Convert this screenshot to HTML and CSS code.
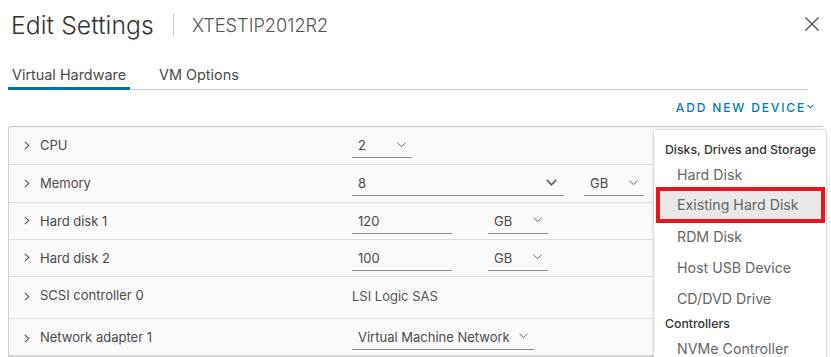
FILE: index.html
```html
<!DOCTYPE html>
<html>
<head>
<meta charset="utf-8">
<link rel="stylesheet" href="styles.css">
</head>
<body>
<div class="modal">
  <div class="header">
    <h1 class="title">Edit Settings</h1>
    <span class="divider"></span>
    <span class="vmname">XTESTIP2012R2</span>
    <span class="spacer"></span>
    <svg class="close" width="16" height="16" viewBox="0 0 16 16"><path d="M1.5 1.5 L14.5 14.5 M14.5 1.5 L1.5 14.5" stroke="#555" stroke-width="1.4" fill="none"/></svg>
  </div>
  <div class="tabs">
    <span class="tab active">Virtual Hardware</span>
    <span class="tab">VM Options</span>
  </div>
  <div class="actions">
    <span class="add">ADD NEW DEVICE</span>
    <svg class="addcaret" width="7" height="5" viewBox="0 0 7 5"><path d="M0.5 0.8 L3.5 3.8 L6.5 0.8" stroke="#0079b8" stroke-width="1.1" fill="none"/></svg>
  </div>
  <div class="panel">
    <div class="row">
      <div class="label"><svg class="chev" width="6" height="9" viewBox="0 0 6 9"><path d="M0.8 0.8 L4.8 4.5 L0.8 8.2" stroke="#565656" stroke-width="1.1" fill="none"/></svg>CPU</div>
      <div class="vals">
        <div class="field w60"><span>2</span><svg width="9" height="6" viewBox="0 0 9 6"><path d="M0.5 0.8 L4.5 4.6 L8.5 0.8" stroke="#666" stroke-width="1" fill="none"/></svg></div>
      </div>
    </div>
    <div class="row">
      <div class="label"><svg class="chev" width="6" height="9" viewBox="0 0 6 9"><path d="M0.8 0.8 L4.8 4.5 L0.8 8.2" stroke="#565656" stroke-width="1.1" fill="none"/></svg>Memory</div>
      <div class="vals">
        <div class="field w211"><span>8</span><svg class="big" width="11" height="7" viewBox="0 0 11 7"><path d="M0.8 0.8 L5.5 5.8 L10.2 0.8" stroke="#555" stroke-width="1.5" fill="none"/></svg></div>
        <div class="field w60 gap21"><span>GB</span><svg width="9" height="6" viewBox="0 0 9 6"><path d="M0.5 0.8 L4.5 4.6 L8.5 0.8" stroke="#666" stroke-width="1" fill="none"/></svg></div>
      </div>
    </div>
    <div class="row">
      <div class="label"><svg class="chev" width="6" height="9" viewBox="0 0 6 9"><path d="M0.8 0.8 L4.8 4.5 L0.8 8.2" stroke="#565656" stroke-width="1.1" fill="none"/></svg>Hard disk 1</div>
      <div class="vals">
        <div class="field w100"><span>120</span></div>
        <div class="field w60 gap36"><span>GB</span><svg width="9" height="6" viewBox="0 0 9 6"><path d="M0.5 0.8 L4.5 4.6 L8.5 0.8" stroke="#666" stroke-width="1" fill="none"/></svg></div>
      </div>
    </div>
    <div class="row">
      <div class="label"><svg class="chev" width="6" height="9" viewBox="0 0 6 9"><path d="M0.8 0.8 L4.8 4.5 L0.8 8.2" stroke="#565656" stroke-width="1.1" fill="none"/></svg>Hard disk 2</div>
      <div class="vals">
        <div class="field w100"><span>100</span></div>
        <div class="field w60 gap36"><span>GB</span><svg width="9" height="6" viewBox="0 0 9 6"><path d="M0.5 0.8 L4.5 4.6 L8.5 0.8" stroke="#666" stroke-width="1" fill="none"/></svg></div>
      </div>
    </div>
    <div class="row tall">
      <div class="label"><svg class="chev low" width="6" height="9" viewBox="0 0 6 9"><path d="M0.8 0.8 L4.8 4.5 L0.8 8.2" stroke="#565656" stroke-width="1.1" fill="none"/></svg>SCSI controller 0</div>
      <div class="vals"><span class="plain">LSI Logic SAS</span></div>
    </div>
    <div class="row">
      <div class="label"><svg class="chev low" width="6" height="9" viewBox="0 0 6 9"><path d="M0.8 0.8 L4.8 4.5 L0.8 8.2" stroke="#565656" stroke-width="1.1" fill="none"/></svg>Network adapter 1</div>
      <div class="vals">
        <div class="field w182"><span>Virtual Machine Network</span><svg width="9" height="6" viewBox="0 0 9 6"><path d="M0.5 0.8 L4.5 4.6 L8.5 0.8" stroke="#666" stroke-width="1" fill="none"/></svg></div>
      </div>
    </div>
  </div>
  <div class="menu">
    <div class="mhead">Disks, Drives and Storage</div>
    <div class="mitem">Hard Disk</div>
    <div class="mitem selected">Existing Hard Disk</div>
    <div class="mitem">RDM Disk</div>
    <div class="mitem">Host USB Device</div>
    <div class="mitem">CD/DVD Drive</div>
    <div class="mhead sub">Controllers</div>
    <div class="mitem">NVMe Controller</div>
  </div>
</div>
</body>
</html>
```

FILE: styles.css
```css
* { box-sizing: border-box; }
html, body { margin: 0; padding: 0; background: #fff; }
body {
  font-family: "Inter", "Noto Sans", sans-serif;
  color: #4a4a4a;
  width: 831px;
  height: 357px;
  overflow: hidden;
}
.modal { position: relative; padding: 0 8px 0 8px; }
.header {
  display: flex;
  align-items: center;
  height: 50px;
  padding: 0 3px 0 3px;
}
.title {
  margin: 0;
  font-weight: 300;
  font-size: 24.7px;
  color: #333;
  letter-spacing: 0.1px;
}
.divider {
  width: 1px;
  height: 22px;
  background: #ccc;
  margin: 0 18px 0 19px;
}
.vmname {
  font-size: 18.2px;
  font-weight: 300;
  color: #555;
}
.spacer { flex: 1; }
.close { display: block; margin-top: -2px; }
.tabs {
  display: flex;
  margin-top: 10px;
  margin-right: 15px;
  border-bottom: 1px solid #ccc;
  height: 30px;
}
.tab {
  font-size: 14.4px;
  color: #4a4a4a;
  padding: 6px 4px 0 4px;
  margin-right: 25px;
  height: 30px;
}
.tab.active {
  border-bottom: 3px solid #0072a3;
  margin-bottom: -1px;
  height: 30px;
}
.actions {
  display: flex;
  justify-content: flex-end;
  align-items: center;
  height: 36px;
  padding-right: 9px;
  padding-bottom: 1px;
}
.add {
  font-size: 12px;
  color: #0079b8;
  letter-spacing: 1.85px;
  font-weight: 500;
}
.addcaret { margin-left: 1px; margin-top: -2px; }
.panel {
  border: 1px solid #ccc;
  border-right: none;
  border-radius: 3px 0 0 0;
  background: #fafafa;
  width: 815px;
}
.row {
  display: flex;
  align-items: center;
  height: 37px;
  border-bottom: 1px solid #ddd;
}
.row:nth-child(1), .row:nth-child(2) { height: 38px; }
.row.tall { height: 42px; padding-bottom: 4px; }
.label {
  width: 343px;
  display: flex;
  align-items: center;
  font-size: 13px;
  color: #4a4a4a;
  padding-left: 15px;
  margin-top: -1px;
}
.chev { margin-right: 10px; }
.chev.low { margin-top: 3px; }
.vals { display: flex; align-items: center; padding-top: 1px; }
.field {
  display: flex;
  align-items: center;
  justify-content: space-between;
  border-bottom: 1px solid #8c8c8c;
  height: 24px;
  padding: 0 6px 1px 6px;
  font-size: 13px;
  color: #4a4a4a;
}
.field svg { margin-top: -1px; }
.field svg.big { margin-right: 1px; }
.w60 { width: 60px; }
.w100 { width: 100px; }
.w182 { width: 182px; }
.w211 { width: 212px; }
.gap21 { margin-left: 20px; }
.gap36 { margin-left: 36px; }
.plain { font-size: 13px; color: #565656; }
.menu {
  position: absolute;
  left: 653px;
  top: 129px;
  width: 174px;
  height: 240px;
  background: #fff;
  border: 1px solid #ddd;
  border-radius: 3px;
  box-shadow: 0 1px 3px rgba(0,0,0,0.15);
  padding-top: 10px;
}
.mhead {
  font-size: 12.3px;
  font-weight: 500;
  color: #333;
  padding-left: 11px;
  height: 19px;
  line-height: 19px;
}
.mitem {
  font-size: 14.2px;
  color: #666;
  padding-left: 23px;
  height: 31px;
  line-height: 31px;
}
.mitem.selected {
  background: #e8e8e8;
  outline: 4px solid #e8161f;
  outline-offset: -4px;
  margin: -3px 1px -2px 2px;
  padding-left: 21px;
  height: 36px;
  line-height: 36px;
}
```
